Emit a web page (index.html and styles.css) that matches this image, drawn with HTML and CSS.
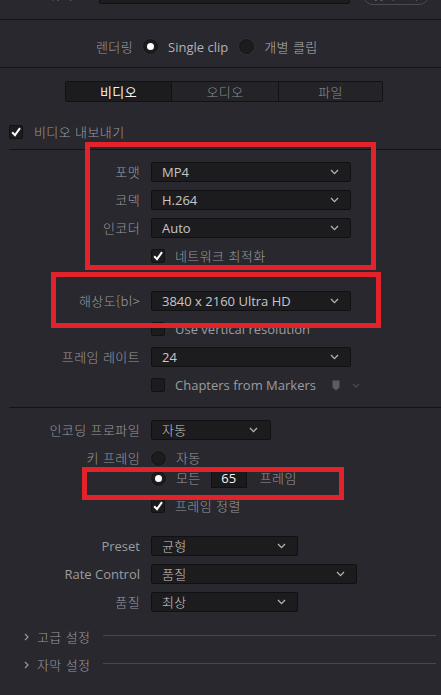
FILE: index.html
```html
<!DOCTYPE html>
<html lang="ko">
<head>
<meta charset="utf-8">
<title>Render Settings</title>
<link rel="stylesheet" href="styles.css">
</head>
<body>
<div class="page">
  <div class="top">
    <div class="top-row">
      <span class="top-label ko">위치</span>
      <div class="top-field"><span class="top-path">C:/Users/영상/렌더링</span></div>
      <div class="top-btn ko">찾아보기</div>
    </div>
  </div>

  <div class="render-row">
    <span class="render-label ko">렌더링</span>
    <span class="radio on"></span><span class="opt">Single clip</span>
    <span class="radio"></span><span class="opt ko">개별 클립</span>
  </div>

  <div class="tabs-wrap">
    <div class="tabs">
      <div class="tab active ko">비디오</div>
      <div class="tab ko">오디오</div>
      <div class="tab ko">파일</div>
    </div>
  </div>

  <div class="export-row">
    <span class="check on"><svg viewBox="0 0 14 14" width="14" height="14"><polyline points="3.2,7.2 6,10.2 11,3.2" fill="none" stroke="#fff" stroke-width="2"/></svg></span>
    <span class="export-text ko">비디오 내보내기</span>
  </div>

  <div class="section s1">
    <div class="row">
      <span class="label ko">포맷</span>
      <div class="dd w200"><span>MP4</span><svg class="chev" viewBox="0 0 9 6" width="9" height="6"><polyline points="1,1 4.5,4.6 8,1" fill="none" stroke="#b4b4b4" stroke-width="1.3"/></svg></div>
    </div>
    <div class="row">
      <span class="label ko">코덱</span>
      <div class="dd w200"><span>H.264</span><svg class="chev" viewBox="0 0 9 6" width="9" height="6"><polyline points="1,1 4.5,4.6 8,1" fill="none" stroke="#b4b4b4" stroke-width="1.3"/></svg></div>
    </div>
    <div class="row">
      <span class="label ko">인코더</span>
      <div class="dd w200"><span>Auto</span><svg class="chev" viewBox="0 0 9 6" width="9" height="6"><polyline points="1,1 4.5,4.6 8,1" fill="none" stroke="#b4b4b4" stroke-width="1.3"/></svg></div>
    </div>
    <div class="row">
      <span class="label"></span>
      <span class="check on"><svg viewBox="0 0 14 14" width="14" height="14"><polyline points="3.2,7.2 6,10.2 11,3.2" fill="none" stroke="#fff" stroke-width="2"/></svg></span>
      <span class="ctext ko">네트워크 최적화</span>
    </div>
    <div class="row gap-lg">
      <span class="label ko">해상도{bl&gt;</span>
      <div class="dd w200"><span>3840 x 2160 Ultra HD</span><svg class="chev" viewBox="0 0 9 6" width="9" height="6"><polyline points="1,1 4.5,4.6 8,1" fill="none" stroke="#b4b4b4" stroke-width="1.3"/></svg></div>
    </div>
    <div class="row">
      <span class="label"></span>
      <span class="check"></span>
      <span class="ctext">Use vertical resolution</span>
    </div>
    <div class="row">
      <span class="label ko">프레임 레이트</span>
      <div class="dd w200"><span>24</span><svg class="chev" viewBox="0 0 9 6" width="9" height="6"><polyline points="1,1 4.5,4.6 8,1" fill="none" stroke="#b4b4b4" stroke-width="1.3"/></svg></div>
    </div>
    <div class="row">
      <span class="label"></span>
      <span class="check"></span>
      <span class="ctext">Chapters from Markers</span>
      <svg class="marker" viewBox="0 0 8 11" width="8" height="11"><path d="M0.5 0.5 H7.5 V7.5 L4 10.5 L0.5 7.5 Z" fill="#5c5c62"/></svg>
      <svg class="mini-chev" viewBox="0 0 8 5" width="8" height="5"><polyline points="1,1 4,4 7,1" fill="none" stroke="#4c4c52" stroke-width="1.2"/></svg>
    </div>
  </div>

  <div class="section s2">
    <div class="row">
      <span class="label ko">인코딩 프로파일</span>
      <div class="dd w120"><span class="ko">자동</span><svg class="chev" viewBox="0 0 9 6" width="9" height="6"><polyline points="1,1 4.5,4.6 8,1" fill="none" stroke="#b4b4b4" stroke-width="1.3"/></svg></div>
    </div>
    <div class="row">
      <span class="label ko">키 프레임</span>
      <span class="radio"></span>
      <span class="ctext ko">자동</span>
    </div>
    <div class="row tight">
      <span class="label"></span>
      <span class="radio on"></span>
      <span class="ctext ko">모든</span>
      <span class="num">65</span>
      <span class="ctext unit ko">프레임</span>
    </div>
    <div class="row">
      <span class="label"></span>
      <span class="check on"><svg viewBox="0 0 14 14" width="14" height="14"><polyline points="3.2,7.2 6,10.2 11,3.2" fill="none" stroke="#fff" stroke-width="2"/></svg></span>
      <span class="ctext ko">프레임 정렬</span>
    </div>
    <div class="row gap-md">
      <span class="label">Preset</span>
      <div class="dd w147"><span class="ko">균형</span><svg class="chev" viewBox="0 0 9 6" width="9" height="6"><polyline points="1,1 4.5,4.6 8,1" fill="none" stroke="#b4b4b4" stroke-width="1.3"/></svg></div>
    </div>
    <div class="row">
      <span class="label">Rate Control</span>
      <div class="dd w206"><span class="ko">품질</span><svg class="chev" viewBox="0 0 9 6" width="9" height="6"><polyline points="1,1 4.5,4.6 8,1" fill="none" stroke="#b4b4b4" stroke-width="1.3"/></svg></div>
    </div>
    <div class="row">
      <span class="label ko">품질</span>
      <div class="dd w147"><span class="ko">최상</span><svg class="chev" viewBox="0 0 9 6" width="9" height="6"><polyline points="1,1 4.5,4.6 8,1" fill="none" stroke="#b4b4b4" stroke-width="1.3"/></svg></div>
    </div>
  </div>

  <div class="adv">
    <div class="adv-row">
      <svg class="arrow" viewBox="0 0 5 8" width="5" height="8"><polyline points="1,1 4,4 1,7" fill="none" stroke="#9a9a9a" stroke-width="1.2"/></svg>
      <span class="adv-text ko">고급 설정</span>
      <span class="adv-line"></span>
    </div>
    <div class="adv-row">
      <svg class="arrow" viewBox="0 0 5 8" width="5" height="8"><polyline points="1,1 4,4 1,7" fill="none" stroke="#9a9a9a" stroke-width="1.2"/></svg>
      <span class="adv-text ko">자막 설정</span>
      <span class="adv-line"></span>
    </div>
  </div>
</div>

<div class="mark m1"></div>
<div class="mark m2"></div>
<div class="mark m3"></div>
</body>
</html>
```

FILE: styles.css
```css
* { box-sizing: border-box; }

body {
  margin: 0;
  width: 441px;
  height: 695px;
  overflow: hidden;
  position: relative;
  background: #28282e;
  font-family: "Open Sans", "Noto Sans CJK KR", sans-serif;
  font-size: 13px;
  line-height: 20px;
  color: #9c9c9f;
}

.ko {
  font-family: "Noto Sans CJK KR", sans-serif;
  font-weight: 300;
  letter-spacing: 0.4px;
}

.page { width: 441px; }

/* top partially visible row */
.top {
  height: 20px;
  overflow: hidden;
  border-bottom: 1px solid #131316;
}
.top-row {
  display: flex;
  align-items: flex-start;
  height: 21px;
  margin-top: -16px;
}
.top-label {
  width: 73px;
  text-align: right;
  line-height: 20px;
  color: #a8a8aa;
}
.top-field {
  margin-left: 26px;
  width: 251px;
  height: 20px;
  background: #1c1c1f;
  border: 1px solid #0f0f11;
  border-radius: 2px;
  display: flex;
  justify-content: flex-end;
  padding-right: 14px;
  color: #a0a0a0;
  font-size: 12px;
  line-height: 18px;
}
.top-btn {
  margin-left: 13px;
  width: 66px;
  height: 21px;
  border: 1px solid #4a4a50;
  border-radius: 10px;
  text-align: center;
  color: #9a9a9a;
  font-size: 12px;
  line-height: 19px;
}

/* render row */
.render-row {
  height: 48px;
  padding-top: 6px;
  padding-left: 96px;
  display: flex;
  align-items: center;
  border-bottom: 1px solid #131316;
}
.render-label { color: #9c9c9f; margin-right: 10px; }
.opt { color: #b2b2b4; margin-left: 10px; margin-right: 11px; }

.radio {
  width: 15px;
  height: 15px;
  border-radius: 50%;
  background: #1c1c1f;
  border: 1px solid #141416;
  box-shadow: 0 0 0 1px #2f2f35;
  position: relative;
  flex: none;
}
.radio.on::after {
  content: "";
  position: absolute;
  left: 3px;
  top: 3px;
  width: 7px;
  height: 7px;
  border-radius: 50%;
  background: #ffffff;
}

/* tabs */
.tabs-wrap { padding: 13px 0 0 65px; }
.tabs {
  width: 318px;
  height: 21px;
  display: grid;
  grid-template-columns: 105px 107px 1fr;
  border: 1px solid #121214;
  border-radius: 2px;
  background: #232328;
}
.tab {
  text-align: center;
  line-height: 19px;
  color: #8e8e92;
  border-left: 1px solid #121214;
}
.tab:first-child { border-left: none; }
.tab.active { background: #1c1c1f; color: #f2f2f2; font-weight: 400; }

/* export row */
.export-row {
  margin-top: 23px;
  height: 14px;
  padding-left: 9px;
  display: flex;
  align-items: center;
}
.export-text { margin-left: 11px; color: #9c9c9f; }

.check {
  width: 14px;
  height: 14px;
  flex: none;
  background: #1c1c1f;
  border: 1px solid #121214;
  border-radius: 2px;
  display: flex;
  align-items: center;
  justify-content: center;
}
.check svg { display: block; margin: -1px; }

/* sections */
.section {
  margin-left: 9px;
  border-top: 1px solid #131316;
  display: flex;
  flex-direction: column;
  gap: 8px;
}
.s1 { margin-top: 10px; padding: 12px 0 12px; }
.s2 { padding: 12px 0 0; }

.row {
  display: flex;
  align-items: center;
  height: 20px;
}
.row.gap-lg { margin-top: 17px; }
.row.gap-md { margin-top: 12px; }
.row.tight { margin-top: -8px; }

.label {
  width: 142px;
  flex: none;
  text-align: right;
  padding-right: 11px;
  color: #9c9c9f;
  white-space: nowrap;
}

.dd {
  height: 20px;
  background: #1c1c1f;
  border: 1px solid #111113;
  border-radius: 2px;
  display: flex;
  align-items: center;
  justify-content: space-between;
  padding: 0 11px 0 10px;
  color: #c6c6c8;
}
.w200 { width: 200px; }
.w120 { width: 120px; padding-right: 12px; }
.w147 { width: 147px; }
.w206 { width: 206px; }
.chev { display: block; }

.ctext { margin-left: 10px; color: #9c9c9f; white-space: nowrap; }

.num {
  margin-left: 10px;
  width: 36px;
  height: 19px;
  background: #1a1a1d;
  border: 1px solid #111113;
  text-align: center;
  color: #f4f4f4;
  line-height: 17px;
}
.ctext.unit { margin-left: 13px; }

.marker { margin-left: 16px; display: block; }
.mini-chev { margin-left: 12px; display: block; }

/* advanced */
.adv {
  margin-top: 15px;
  display: flex;
  flex-direction: column;
  gap: 8px;
}
.adv-row {
  height: 20px;
  display: flex;
  align-items: center;
  padding-left: 24px;
}
.arrow { display: block; }
.adv-text { margin-left: 8px; color: #9c9c9f; }
.adv-line {
  flex: 1;
  height: 1px;
  background: #46464c;
  margin: -3px 5px 0 13px;
}

/* red annotation boxes overlaying the screenshot */
.mark {
  position: absolute;
  border: 5px solid #e3232b;
}
.m1 { left: 85px; top: 142px; width: 291px; height: 128px; }
.m2 { left: 51px; top: 272px; width: 330px; height: 56px; }
.m3 { left: 82px; top: 467px; width: 262px; height: 33px; }
```
